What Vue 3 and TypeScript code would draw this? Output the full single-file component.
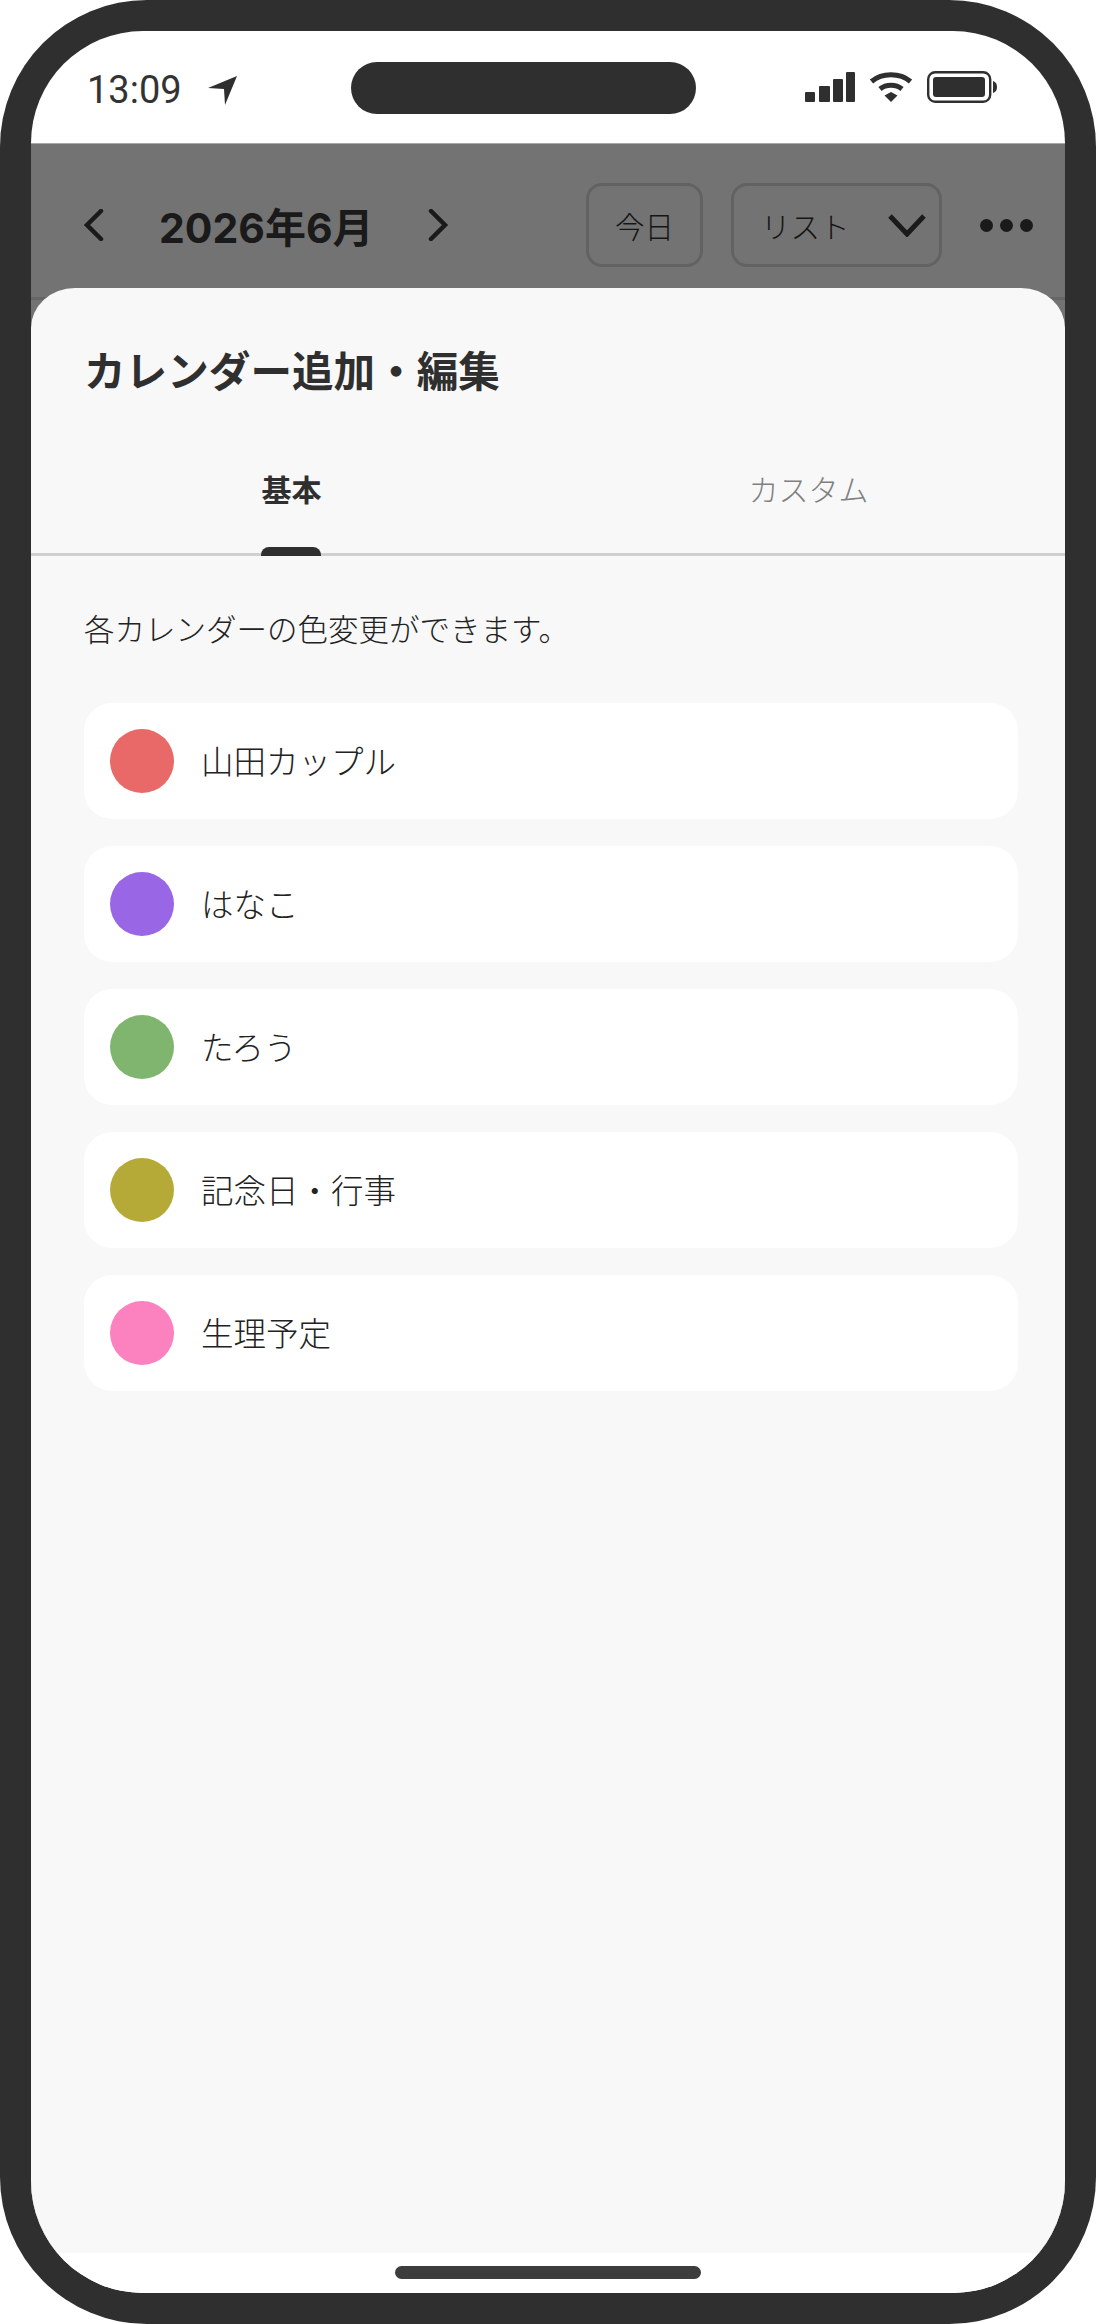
<script setup lang="ts">
interface Cal { name: string; color: string }
const calendars: Cal[] = [
  { name: '山田カップル', color: '#e96868' },
  { name: 'はなこ', color: '#9966e6' },
  { name: 'たろう', color: '#80b56f' },
  { name: '記念日・行事', color: '#b5aa38' },
  { name: '生理予定', color: '#fb81bf' },
]
</script>

<template>
  <div class="phone">
    <div class="screen">
      <div class="status">
        <div class="status-left">
          <span class="time">13:09</span>
          <svg class="loc" width="30" height="30" viewBox="0 0 30 30"><path d="M0 13 L29 1 L17 30 L16 14 Z" fill="#2f2f2f" /></svg>
        </div>
        <div class="island"></div>
        <div class="status-right">
          <svg width="52" height="32" viewBox="0 0 52 32" fill="#2f2f2f">
            <rect x="0" y="21" width="10" height="10" rx="1" />
            <rect x="14" y="15" width="11" height="16" rx="1" />
            <rect x="28" y="8" width="10" height="23" rx="1" />
            <rect x="41" y="1" width="9" height="30" rx="1" />
          </svg>
          <svg class="wifi" width="44" height="32" viewBox="0 0 44 32">
            <path d="M2.5 10.5 C13 1.5 31 1.5 41.5 10.5" fill="none" stroke="#2f2f2f" stroke-width="5" />
            <path d="M11 18 C17 13 27 13 33 18" fill="none" stroke="#2f2f2f" stroke-width="5" />
            <path d="M15.5 24.5 L22 21 L28.500 24.500 L22 31 Z" fill="#2f2f2f" />
          </svg>
          <svg class="batt" width="71" height="32" viewBox="0 0 71 32">
            <rect x="1.200" y="1.200" width="62" height="29.600" rx="7" fill="none" stroke="#2f2f2f" stroke-width="2.400" />
            <rect x="6" y="6" width="52" height="20" rx="3" fill="#2f2f2f" />
            <path d="M66 10 C69 11 70 13 70 16 C70 19 69 21 66 22 Z" fill="#2f2f2f" />
          </svg>
        </div>
      </div>

      <div class="backdrop">
        <div class="cal-header">
          <svg class="chev" width="22" height="32" viewBox="0 0 22 32"><path d="M18 2 L4 16 L18 30" /></svg>
          <span class="month">2026年6月</span>
          <svg class="chev" width="22" height="32" viewBox="0 0 22 32"><path d="M4 2 L18 16 L4 30" /></svg>
          <div class="spacer"></div>
          <div class="btn today">今日</div>
          <div class="btn list">
            <span>リスト</span>
            <svg class="down" width="38" height="24" viewBox="0 0 38 24"><path d="M2 3 L19 21 L36 3" /></svg>
          </div>
          <div class="dots"><i></i><i></i><i></i></div>
        </div>
      </div>

      <div class="home-area"><div class="home-bar"></div></div>

      <section class="sheet">
        <h1 class="title">カレンダー追加・編集</h1>
        <div class="tabs">
          <div class="tab active">基本<span class="indicator"></span></div>
          <div class="tab">カスタム</div>
        </div>
        <p class="desc">各カレンダーの色変更ができます。</p>
        <ul class="list-items">
          <li v-for="c in calendars" :key="c.name" class="item">
            <span class="dot" :style="{ background: c.color }"></span>
            <span class="name">{{ c.name }}</span>
          </li>
        </ul>
      </section>
    </div>
  </div>
</template>

<style>
html, body { margin: 0; background: #fff; }
</style>

<style scoped>
* { box-sizing: border-box; }
.phone {
  width: 1096px;
  height: 2324px;
  padding: 31px;
  background: #2f2f2f;
  border-radius: 147px;
  font-family: "Noto Sans CJK JP", "Noto Sans", sans-serif;
  color: #2f2f2f;
}
.screen {
  position: relative;
  width: 100%;
  height: 100%;
  display: flex;
  flex-direction: column;
  background: #fff;
  border-radius: 112px;
  overflow: hidden;
}
.status {
  flex: none;
  height: 112px;
  display: flex;
  align-items: flex-start;
  justify-content: space-between;
  position: relative;
}
.status-left {
  display: flex;
  align-items: center;
  gap: 26px;
  padding: 36px 0 0 56px;
}
.time {
  font-family: Roboto, sans-serif;
  font-size: 38px;
  line-height: 46px;
  color: #333;
}
.loc { margin-top: -1px; }
.island {
  position: absolute;
  left: 320px;
  top: 31px;
  width: 345px;
  height: 52px;
  background: #2f2f2f;
  border-radius: 26px;
}
.status-right {
  display: flex;
  align-items: flex-start;
  padding: 40px 0 0 0;
  margin-right: 67px;
}
.wifi { margin-left: 12px; }
.batt { margin-left: 14px; }
.backdrop {
  flex: 1;
  background: #737373;
  border-top: 1px solid #a8a8a8;
}
.cal-header {
  height: 156px;
  display: flex;
  align-items: center;
  padding: 9px 32px 0 52px;
  border-bottom: 3px solid #666;
  color: #1a1a1a;
}
.chev { fill: none; stroke: #1a1a1a; stroke-width: 4.500px; stroke-linecap: round; flex: none; }
.month {
  font-family: Inter, "Noto Sans CJK JP", sans-serif;
  font-size: 41px;
  font-weight: 700;
  margin: 0 53px 0 54px;
  white-space: nowrap;
}
.spacer { flex: 1; }
.btn {
  height: 84px;
  display: flex;
  align-items: center;
  border: 3px solid #626262;
  border-radius: 16px;
  font-size: 29.500px;
  font-weight: 300;
  color: #151515;
}
.today { width: 117px; justify-content: center; }
.list {
  width: 211px;
  margin-left: 28px;
  padding: 0 13px 0 27px;
  justify-content: space-between;
}
.down { fill: none; stroke: #1a1a1a; stroke-width: 5px; }
.dots { display: flex; gap: 7px; margin-left: 38px; }
.dots i { width: 13px; height: 13px; border-radius: 50%; background: #1a1a1a; }
.home-area {
  flex: none;
  height: 40px;
  display: flex;
  justify-content: center;
  padding-top: 13px;
  background: #fff;
}
.home-bar {
  width: 306px;
  height: 13px;
  border-radius: 7px;
  background: #3d3d3d;
}
.sheet {
  position: absolute;
  left: 0;
  right: 0;
  top: 257px;
  bottom: 40px;
  background: #f8f8f8;
  border-radius: 44px 44px 0 0 / 40px 40px 0 0;
}
.title {
  margin: 0;
  padding: 51px 0 0 53px;
  font-size: 41.600px;
  line-height: 60px;
  font-weight: 700;
}
.tabs {
  display: flex;
  margin-top: 36px;
  height: 121px;
  border-bottom: 3px solid #d0d0d0;
}
.tab {
  position: relative;
  flex: 1;
  display: flex;
  justify-content: center;
  padding: 31px 0 0 4px;
  font-size: 30px;
  line-height: 44px;
  font-weight: 300;
  color: #808080;
}
.tab.active { font-weight: 700; color: #2f2f2f; }
.indicator {
  position: absolute;
  left: 50%;
  bottom: -3px;
  width: 60px;
  height: 9px;
  margin-left: -29px;
  background: #2f2f2f;
  border-radius: 8px 8px 0 0;
}
.desc {
  margin: 50px 0 0 53px;
  font-size: 30.500px;
  font-weight: 300;
  line-height: 44px;
  color: #222;
}
.list-items {
  list-style: none;
  margin: 53px 0 0;
  padding: 0 47px 0 53px;
  display: flex;
  flex-direction: column;
  gap: 27px;
}
.item {
  height: 116px;
  display: flex;
  align-items: center;
  gap: 27px;
  padding-left: 26px;
  background: #fff;
  border-radius: 28px;
}
.dot { width: 64px; height: 64px; border-radius: 50%; flex: none; }
.name { padding-bottom: 3px; font-size: 32.500px; font-weight: 300; color: #222; }
</style>
